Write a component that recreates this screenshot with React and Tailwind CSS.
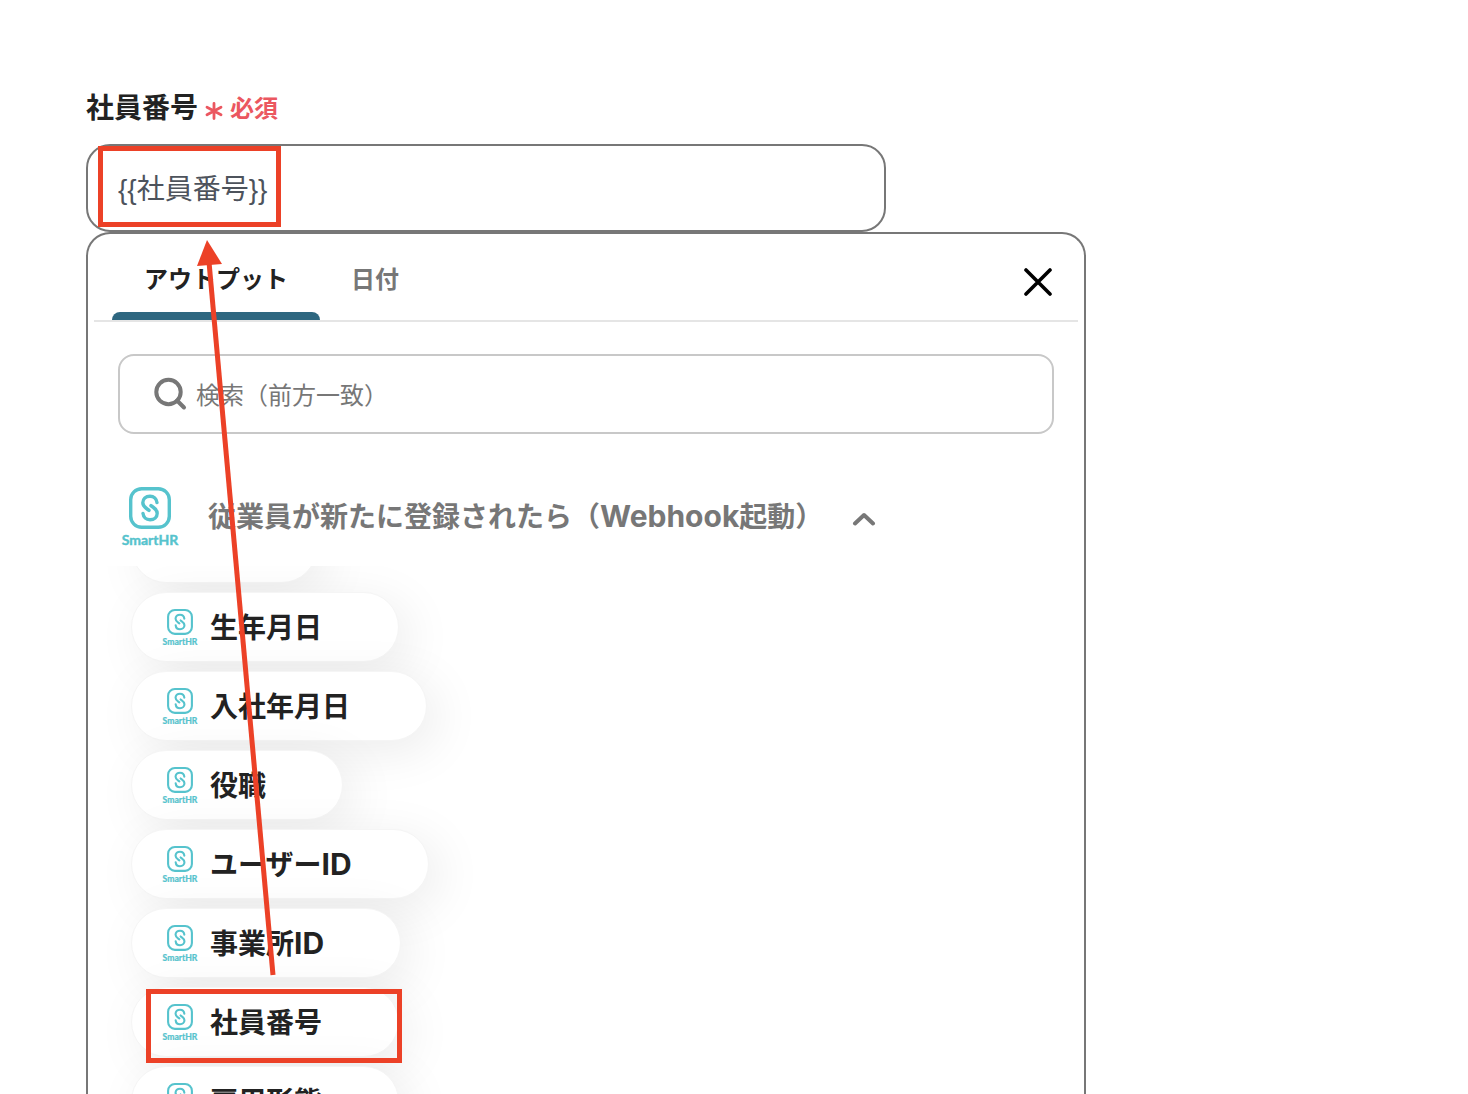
import React, { useState } from 'react';

const outputs = ['ID', '生年月日', '入社年月日', '役職', 'ユーザーID', '事業所ID', '社員番号', '雇用形態'];

function SmartHRLogo({ className }) {
  return (
    <svg viewBox="0 0 58 60" className={className} fill="none" role="img" aria-label="SmartHR">
      <rect x="9.7" y="1.7" width="38.6" height="38.6" rx="11" stroke="#56c3cd" strokeWidth="3.4" />
      <g stroke="#56c3cd" strokeWidth="3.4" strokeLinecap="round">
        <path d="M36 15.6C35.6 11.6 32.8 9.2 29 9.2C24.8 9.2 21.8 12 21.8 15.8C21.8 19.8 25 21 28 23.4" />
        <path d="M22 26.4C22.4 30.4 25.2 32.8 29 32.8C33.2 32.8 36.2 30 36.2 26.2C36.2 22.2 33 21 30 18.6" />
      </g>
      <text
        x="29"
        y="58"
        textAnchor="middle"
        fill="#56c3cd"
        stroke="#56c3cd"
        strokeWidth="0.4"
        fontSize="14"
        fontWeight="700"
        fontFamily="Lato, sans-serif"
      >
        SmartHR
      </text>
    </svg>
  );
}

// Latin letters run slightly larger than the kana and kanji beside them
function MixedText({ text }) {
  return text.split(/([A-Za-z]+)/).map((part, i) =>
    i % 2 ? (
      <span key={i} className="text-[30px] leading-none">
        {part}
      </span>
    ) : (
      part
    )
  );
}

function OutputPill({ label, onSelect }) {
  return (
    <button
      type="button"
      onClick={() => onSelect(label)}
      className="flex h-[70px] shrink-0 items-center gap-3 rounded-full border border-[#f5f5f5] bg-white pr-[76px] pl-[30px] text-[28px] leading-10 font-bold text-[#222] shadow-[10px_10px_50px_rgba(0,0,0,0.08)]"
    >
      <SmartHRLogo className="h-[37px] w-9" />
      <span className="pt-0.5 whitespace-nowrap">
        <MixedText text={label} />
      </span>
    </button>
  );
}

function App() {
  const [value, setValue] = useState('{{社員番号}}');
  const [keyword, setKeyword] = useState('');

  return (
    <div className="relative flex h-screen flex-col overflow-hidden bg-white px-[86px] pt-[88px] font-['Inter','Noto_Sans_CJK_JP',sans-serif]">
      {/* Field */}
      <label htmlFor="employee-number" className="flex h-10 items-center text-[28px] leading-10 font-bold text-[#222]">
        社員番号
        <svg viewBox="0 0 18 18" className="mt-1.5 mr-[7px] ml-[7px] size-[18px]" stroke="#eb5760" strokeWidth="2.8" strokeLinecap="round">
          <path d="M9 1.5v15M2 5.2l14 7.6M16 5.2l-14 7.6" />
        </svg>
        <span className="pt-0.5 text-2xl text-[#eb5760]">必須</span>
      </label>
      <input
        id="employee-number"
        type="text"
        value={value}
        onChange={(e) => setValue(e.target.value)}
        className="mt-4 h-[88px] w-full max-w-[800px] shrink-0 rounded-3xl border-2 border-[#777] px-[30px] pb-0.5 font-['Liberation_Sans','Noto_Sans_CJK_JP',sans-serif] text-[28px] text-[#4d535c] outline-none"
      />

      {/* Output picker */}
      <div className="flex min-h-0 w-full max-w-[1000px] flex-1 flex-col rounded-t-3xl border-2 border-b-0 border-[#777] px-1.5">
        <div className="flex h-[88px] shrink-0 border-b-2 border-[#e5e5e5] pl-[18px] text-2xl font-bold">
          <button type="button" className="flex flex-col justify-between px-0 pt-7 text-[#222]">
            <span className="px-8 leading-9">アウトプット</span>
            <span className="h-2 w-full rounded-t-lg bg-[#2e6780]" />
          </button>
          <button type="button" className="flex px-[31px] pt-7 leading-9 text-[#777]">
            日付
          </button>
          <button type="button" aria-label="閉じる" className="mt-7 mr-5 ml-auto flex size-10 items-center justify-center">
            <svg viewBox="0 0 28 28" className="size-7" stroke="#000" strokeWidth="3.6" strokeLinecap="round">
              <path d="M2 2l24 24M26 2L2 26" />
            </svg>
          </button>
        </div>

        <label className="mx-6 mt-8 flex h-20 shrink-0 items-center gap-2 rounded-2xl border-2 border-[#c8c8c8] px-[34px]">
          <svg viewBox="0 0 34 34" className="size-[34px] shrink-0" fill="none" stroke="#777" strokeWidth="4">
            <circle cx="14.5" cy="15" r="12.2" />
            <path d="M23 23.5l7 7" strokeLinecap="round" />
          </svg>
          <input
            type="text"
            aria-label="検索"
            value={keyword}
            onChange={(e) => setKeyword(e.target.value)}
            placeholder="検索（前方一致）"
            className="h-12 min-w-0 flex-1 pt-0.5 text-2xl outline-none placeholder:text-[#777]"
          />
        </label>

        <button type="button" className="mt-8 flex h-[100px] shrink-0 items-center pl-[27px] text-[28px] leading-10 font-bold text-[#777]">
          <SmartHRLogo className="mt-0.5 mr-[29px] h-[60px] w-[58px]" />
          <span className="pt-0.5 whitespace-nowrap">
            <MixedText text="従業員が新たに登録されたら（Webhook起動）" />
          </span>
          <svg viewBox="0 0 24 14" className="mt-1.5 ml-[29px] h-3.5 w-6" fill="none" stroke="#777" strokeWidth="4" strokeLinecap="round" strokeLinejoin="round">
            <path d="M3 11.5l9-8.5l9 8.5" />
          </svg>
        </button>

        <div className="min-h-0 flex-1 overflow-hidden pl-[37px]">
          <div className="-mt-[53px] flex flex-col items-start gap-[9px]">
            {outputs.map((label) => (
              <OutputPill key={label} label={label} onSelect={(name) => setValue(`{{${name}}}`)} />
            ))}
          </div>
        </div>
      </div>

      {/* Annotation: picked output goes into the field */}
      <svg className="pointer-events-none absolute top-0 left-0 h-[1094px] w-[500px]" viewBox="0 0 500 1094" fill="none" stroke="#ec4127" strokeWidth="5">
        <rect x="100.5" y="148.5" width="178" height="76" />
        <rect x="148.5" y="991.5" width="251" height="69" />
        <path d="M273 975L209 262" />
        <path d="M207 240L222 264L197 266Z" fill="#ec4127" stroke="none" />
      </svg>
    </div>
  );
}

export default App;
